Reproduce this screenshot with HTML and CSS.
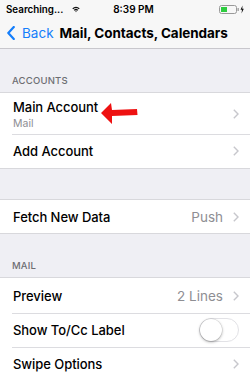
FILE: index.html
```html
<!DOCTYPE html>
<html>
<head>
<meta charset="utf-8">
<link rel="stylesheet" href="styles.css">
</head>
<body>
<div class="status">
  <div class="status-left">
    <span class="carrier">Searching...</span>
    <svg class="wifi" width="8" height="7" viewBox="0 0 8 7"><path d="M0.3 2.4 A5.2 5.2 0 0 1 7.7 2.4 L6.8 3.3 A4 4 0 0 0 1.2 3.3 Z M1.8 3.9 A3.1 3.1 0 0 1 6.2 3.9 L5.3 4.8 A1.9 1.9 0 0 0 2.7 4.8 Z M3.3 5.4 A1 1 0 0 1 4.7 5.4 L4 6.2 Z" fill="#111"/></svg>
  </div>
  <span class="time">8:39 PM</span>
  <div class="status-right">
    <svg width="26" height="9" viewBox="0 0 26 9"><rect x="0.5" y="0.5" width="17" height="8" rx="2" fill="none" stroke="#999"/><rect x="2" y="2" width="6" height="5" fill="#2ecc40"/><rect x="18.5" y="3" width="1.3" height="3" fill="#999"/><path d="M23.5 0.5 L21.5 4.8 L23 4.8 L22.5 8.5 L24.8 3.8 L23.3 3.8 Z" fill="#111"/></svg>
  </div>
</div>
<div class="nav">
  <svg class="back-chev" width="8" height="14" viewBox="0 0 8 14"><path d="M6.8 1 L1.3 7 L6.8 13" fill="none" stroke="#147efb" stroke-width="2.2" stroke-linecap="round" stroke-linejoin="round"/></svg>
  <span class="back">Back</span>
  <span class="title">Mail, Contacts, Calendars</span>
</div>

<div class="section-head first">ACCOUNTS</div>
<div class="group">
  <div class="row tall">
    <div class="row-text">
      <div class="label">Main Account</div>
      <div class="sub">Mail</div>
    </div>
    <svg class="chev" width="6" height="10" viewBox="0 0 6 10"><path d="M0.8 0.8 L5 5 L0.8 9.2" fill="none" stroke="#c7c7cc" stroke-width="1.4"/></svg>
    <svg class="arrow" width="40" height="24" viewBox="0 0 40 24"><path d="M0 12 L10 2 L11 9 L36 8 L36.5 14 L11 15 L11 23 Z" fill="#ee1111"/></svg>
  </div>
  <div class="row sep">
    <div class="label">Add Account</div>
    <svg class="chev" width="6" height="10" viewBox="0 0 6 10"><path d="M0.8 0.8 L5 5 L0.8 9.2" fill="none" stroke="#c7c7cc" stroke-width="1.4"/></svg>
  </div>
</div>

<div class="group gap">
  <div class="row fetch">
    <div class="label">Fetch New Data</div>
    <span class="value">Push</span>
    <svg class="chev" width="6" height="10" viewBox="0 0 6 10"><path d="M0.8 0.8 L5 5 L0.8 9.2" fill="none" stroke="#c7c7cc" stroke-width="1.4"/></svg>
  </div>
</div>

<div class="section-head">MAIL</div>
<div class="group">
  <div class="row preview">
    <div class="label">Preview</div>
    <span class="value">2 Lines</span>
    <svg class="chev" width="6" height="10" viewBox="0 0 6 10"><path d="M0.8 0.8 L5 5 L0.8 9.2" fill="none" stroke="#c7c7cc" stroke-width="1.4"/></svg>
  </div>
  <div class="row sep">
    <div class="label">Show To/Cc Label</div>
    <div class="toggle"><div class="knob"></div></div>
  </div>
  <div class="row sep">
    <div class="label">Swipe Options</div>
    <svg class="chev" width="6" height="10" viewBox="0 0 6 10"><path d="M0.8 0.8 L5 5 L0.8 9.2" fill="none" stroke="#c7c7cc" stroke-width="1.4"/></svg>
  </div>
</div>
</body>
</html>
```
FILE: styles.css
```css
html, body {
  margin: 0;
  padding: 0;
}
body {
  width: 250px;
  height: 375px;
  overflow: hidden;
  background: #efeff4;
  font-family: Inter, "Liberation Sans", sans-serif;
  color: #000;
}
.status {
  height: 18px;
  background: #f7f7f7;
  display: flex;
  align-items: center;
  justify-content: space-between;
  padding: 0 5px 0 6px;
  font-size: 9.8px;
  font-weight: 600;
}
.status-left {
  display: flex;
  align-items: center;
  gap: 9px;
  width: 80px;
}
.time {
  font-size: 10px;
  margin-left: 16px;
}
.status-right {
  width: 80px;
  display: flex;
  justify-content: flex-end;
}
.nav {
  height: 31px;
  background: #f7f7f7;
  border-bottom: 1px solid #c8c7cc;
  display: flex;
  align-items: center;
  padding-left: 7px;
  box-sizing: border-box;
}
.back-chev {
  margin-right: 7px;
}
.back {
  color: #147efb;
  font-size: 13.5px;
  margin-right: 6px;
}
.title {
  font-size: 13.5px;
  font-weight: 700;
  letter-spacing: -0.05px;
}
.section-head {
  height: 43px;
  box-sizing: border-box;
  padding: 0 0 6px 12px;
  display: flex;
  align-items: flex-end;
  font-size: 9.5px;
  color: #6d6d72;
  font-weight: 500;
  letter-spacing: 0.2px;
}
.group {
  background: #fff;
  border-top: 0.5px solid #d8d8dc;
  border-bottom: 0.5px solid #d8d8dc;
}
.group.gap {
  margin-top: 30px;
}
.row {
  position: relative;
  height: 34px;
  display: flex;
  align-items: center;
  padding: 0 11px 0 13px;
  box-sizing: border-box;
}
.row.tall {
  height: 41px;
  padding-top: 1px;
}
.row.fetch {
  height: 33px;
}
.row.preview {
  height: 35px;
}
.row.sep::before {
  content: "";
  position: absolute;
  left: 12px;
  right: 0;
  top: 0;
  border-top: 1px solid #dcdce0;
}
.row-text {
  flex: 1;
}
.label {
  flex: 1;
  font-size: 13px;
  font-weight: 500;
  letter-spacing: -0.05px;
}
.sub {
  font-size: 10.5px;
  color: #8e8e93;
  margin-top: 2px;
}
.value {
  color: #8e8e93;
  font-size: 13.5px;
  margin-right: 10px;
}
.arrow {
  position: absolute;
  left: 101px;
  top: 8px;
}
.toggle {
  width: 40px;
  height: 24px;
  border-radius: 12px;
  border: 1px solid #e2e2e6;
  box-sizing: border-box;
  background: #fff;
  position: relative;
}
.knob {
  position: absolute;
  left: 0;
  top: 0;
  width: 22px;
  height: 22px;
  border-radius: 50%;
  background: #fff;
  box-shadow: 0 1px 3px rgba(0,0,0,0.35), 0 0 0 0.5px rgba(0,0,0,0.1);
}
```
